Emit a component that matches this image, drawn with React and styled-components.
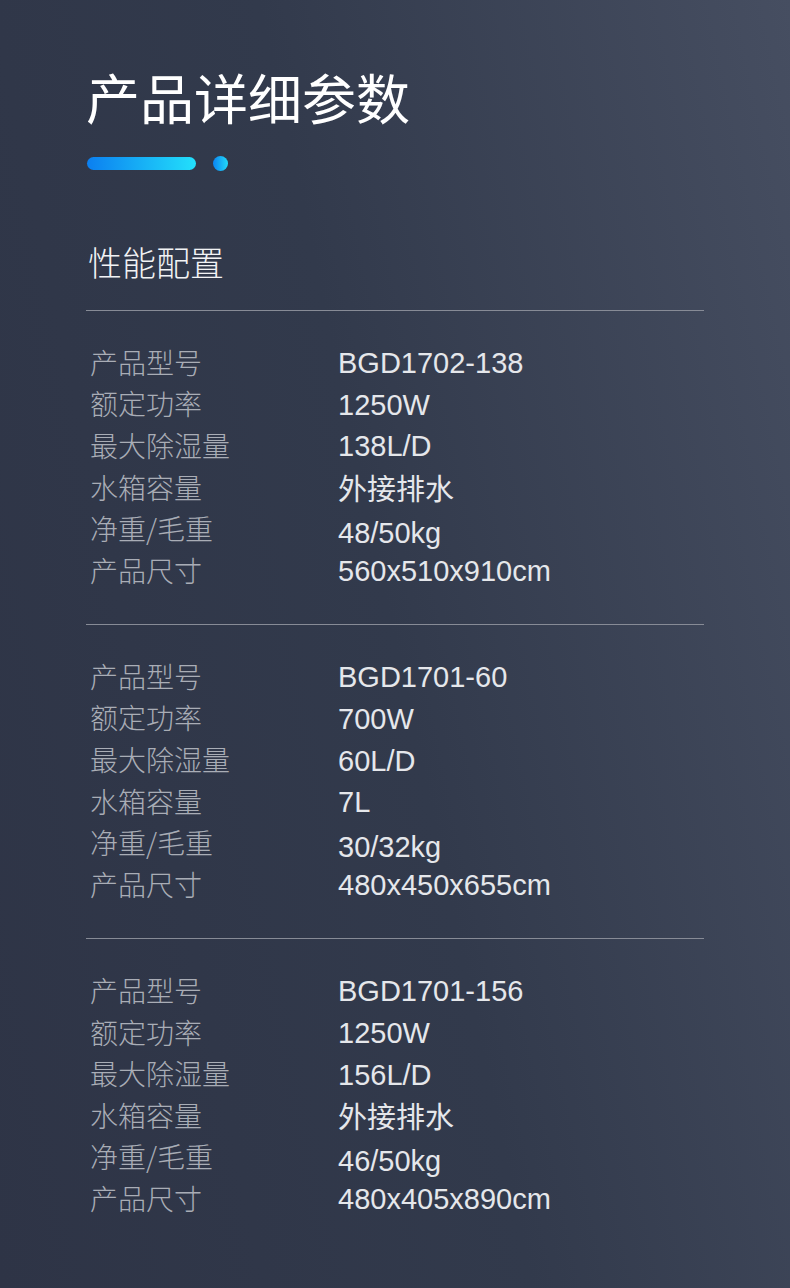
import React from 'react';
import styled, { createGlobalStyle } from 'styled-components';

const GlobalStyle = createGlobalStyle`
  html, body {
    margin: 0;
    padding: 0;
  }
  body {
    font-family: "Noto Sans CJK SC", "Liberation Sans", sans-serif;
  }
`;

const Page = styled.div`
  width: 790px;
  min-height: 1288px;
  box-sizing: border-box;
  padding: 67px 0 0 86px;
  background: linear-gradient(78deg, #2e3446 0%, #323a4c 50%, #464e61 100%);
`;

const Title = styled.h1`
  margin: 0;
  font-size: 54px;
  line-height: 60px;
  font-weight: 400;
  color: #ffffff;
`;

const Accent = styled.div`
  display: flex;
  align-items: center;
  gap: 17px;
  margin-top: 29px;
  padding-left: 1px;
`;

const Bar = styled.span`
  display: block;
  width: 109px;
  height: 13px;
  border-radius: 7px;
  background: linear-gradient(90deg, #0b7ff0, #23e0fb);
`;

const Dot = styled.span`
  display: block;
  width: 15px;
  height: 15px;
  border-radius: 50%;
  background: linear-gradient(90deg, #0b84f0, #22dafa);
`;

const Subtitle = styled.h2`
  margin: 71px 0 28px 2px;
  font-size: 34px;
  line-height: 40px;
  font-weight: 300;
  color: #f2f3f5;
`;

const Divider = styled.hr`
  margin: 0;
  width: 618px;
  border: none;
  height: 1px;
  background: #878b96;
`;

const Group = styled.div`
  padding: 30px 0 33.5px 4px;
`;

const Row = styled.div`
  display: grid;
  grid-template-columns: 248px 1fr;
  height: 41.6px;
  align-items: center;
`;

const Label = styled.span`
  font-family: "Noto Sans CJK SC", sans-serif;
  font-size: 28px;
  font-weight: 300;
  color: #a9adb6;
`;

const Value = styled.span`
  font-family: "Liberation Sans", "Noto Sans CJK SC", sans-serif;
  font-size: 29px;
  color: #e5e7eb;
  transform: translateY(${(p) => p.$shift}px);
`;

const products = [
  ['BGD1702-138', '1250W', '138L/D', '外接排水', '48/50kg', '560x510x910cm'],
  ['BGD1701-60', '700W', '60L/D', '7L', '30/32kg', '480x450x655cm'],
  ['BGD1701-156', '1250W', '156L/D', '外接排水', '46/50kg', '480x405x890cm'],
];

const labels = ['产品型号', '额定功率', '最大除湿量', '水箱容量', '净重/毛重', '产品尺寸'];

// latin values sit a touch lower than the CJK labels; the weight row lower still
const shiftFor = (value, j) => {
  if (/[\u4e00-\u9fff]/.test(value)) return 0;
  return j === 4 ? 5 : 2;
};

function App() {
  return (
    <>
      <GlobalStyle />
      <Page>
        <Title>产品详细参数</Title>
        <Accent>
          <Bar />
          <Dot />
        </Accent>
        <Subtitle>性能配置</Subtitle>
        <Divider />
        {products.map((values, i) => (
          <React.Fragment key={values[0]}>
            <Group>
              {labels.map((label, j) => (
                <Row key={label}>
                  <Label>{label}</Label>
                  <Value $shift={shiftFor(values[j], j)}>{values[j]}</Value>
                </Row>
              ))}
            </Group>
            {i < products.length - 1 && <Divider />}
          </React.Fragment>
        ))}
      </Page>
    </>
  );
}

export default App;
